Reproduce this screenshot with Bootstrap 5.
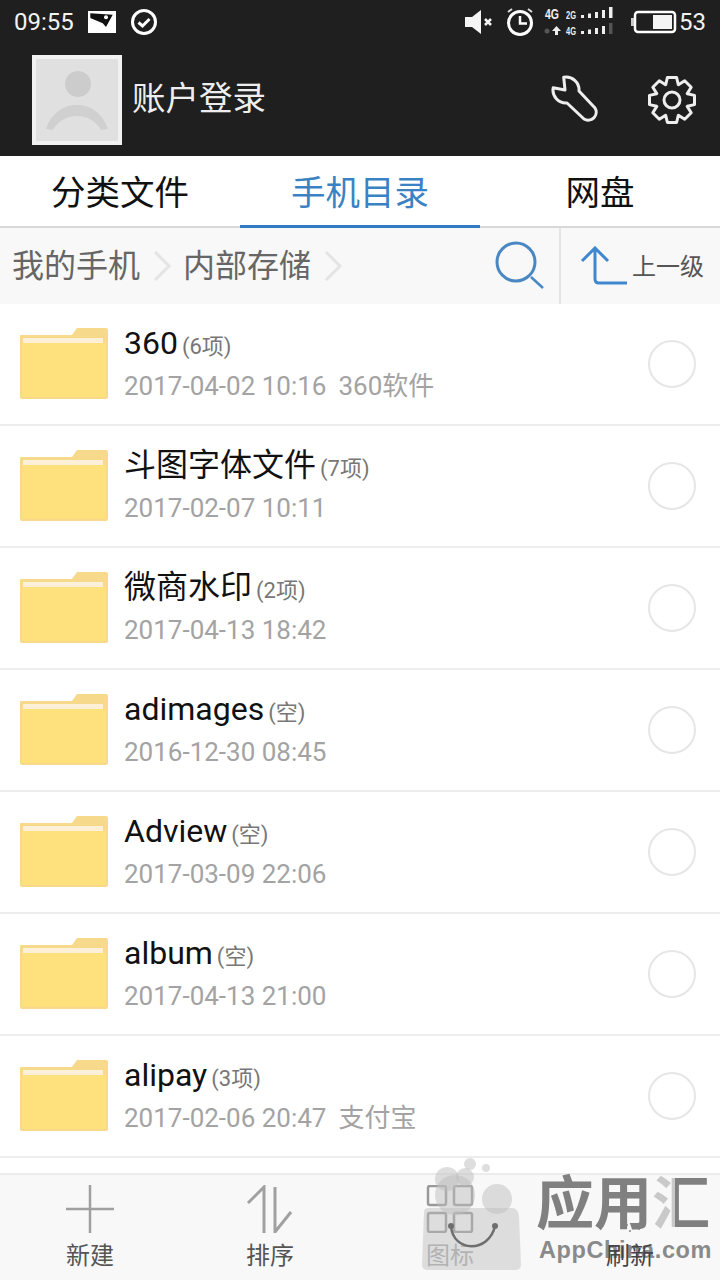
<!DOCTYPE html>
<html lang="zh-CN">
<head>
    <meta charset="UTF-8">
    <title>文件管理</title>
    <link href="https://cdn.jsdelivr.net/npm/bootstrap@5.3.2/dist/css/bootstrap.min.css" rel="stylesheet">
    <script src="https://cdn.jsdelivr.net/npm/bootstrap@5.3.2/dist/js/bootstrap.bundle.min.js"></script>
    <style>
        body {
            width: 720px;
            height: 1280px;
            overflow: hidden;
            position: relative;
            font-family: Roboto, "Noto Sans CJK SC", sans-serif;
            background: #fff;
        }
        #topArea { height: 156px; background: #1f1f1f; color: #f2f2f2; }
        #statusBar { height: 44px; padding: 0 14px; font-size: 24px; }
        .status-left { gap: 14px; }
        .mini-net { font-family: "Liberation Sans", sans-serif; font-size: 12px; font-weight: 700; }
        #alarmIcon { margin-left: 12px; }
        #netIcon { margin-left: 9px; }
        #batteryIcon { margin-left: 15px; }
        #batteryText { margin-left: 2px; }
        #accountRow { height: 112px; padding-left: 32px; padding-right: 23px; }
        #avatar { width: 90px; height: 90px; border: 4px solid #f1f1f1; background: #e0e0e0; }
        #accountName { font-size: 33.5px; margin-left: 10px; margin-top: -2px; color: #eee; }
        #tabBar { height: 72px; border-bottom: 2px solid #d8d8d8; }
        #tabBar .nav-link {
            height: 72px;
            padding: 10px 0 0;
            font-size: 34.5px;
            line-height: 54px;
            color: #111;
            border-radius: 0;
            background: none;
        }
        #tabBar .nav-link.active { color: #3a82c4; border-bottom: 3px solid #2f7cc5; }
        #crumbBar { height: 76px; background: #f8f8f8; padding-left: 12px; color: #666; font-size: 32px; }
        .crumb-gap { margin: 0 11px 0 12px; }
        #searchBtn { margin-left: auto; margin-right: 14px; }
        #upBtn { width: 161px; height: 76px; border-left: 2px solid #e4e4e4; padding-left: 19px; font-size: 24px; color: #555; }
        #upBtn span { margin-left: 2px; margin-top: 2px; }
        #fileList { height: 869px; overflow: hidden; }
        #fileList .file-row {
            height: 122px;
            padding: 0 24px 0 20px;
            border-width: 0 0 2px;
            border-color: #ececec;
            border-radius: 0;
        }
        .folder-icon { margin-top: -2px; }
        .file-text { margin-top: -1px; margin-left: 16px; }
        .file-name { font-size: 32px; line-height: 40px; color: #111; }
        .file-count { font-size: 22px; color: #777; margin-left: 4px; }
        .file-sub { font-size: 26px; line-height: 38px; color: #a3a3a3; }
        .file-sub span { margin-left: 12px; }
        .pick-circle { width: 48px; height: 48px; border: 2px solid #e6e6e6; border-radius: 50%; }
        #bottomBar { height: 107px; background: #f8f8f8; border-top: 2px solid #ececec; }
        .tool-btn { width: 180px; padding-top: 10px; font-size: 24px; line-height: 34px; color: #555; }
        .tool-btn svg { display: block; margin-bottom: 6px; }
        #refreshLabel { position: relative; z-index: 2; color: #444; }
        #iconLabel { color: #aaa; }
        #watermark { position: absolute; left: 420px; top: 1155px; width: 300px; height: 125px; pointer-events: none; }
        #wmName { position: absolute; left: 116px; top: 14px; font-size: 58px; line-height: 70px; font-weight: 700; color: #808080; white-space: nowrap; }
        #wmName span {
            background: linear-gradient(90deg, #c9c9c9 40%, #808080 40%);
            -webkit-background-clip: text;
            background-clip: text;
            color: transparent;
        }
        #wmSite { position: absolute; left: 119px; top: 80px; font-family: "Liberation Sans", sans-serif; font-size: 23.5px; line-height: 30px; font-weight: 700; color: #8a8a8a; white-space: nowrap; letter-spacing: .6px; }
    </style>
</head>
<body>

<div id="topArea">
    <div id="statusBar" class="d-flex align-items-center">
        <div class="d-flex align-items-center status-left">
            <span>09:55</span>
            <svg width="28" height="23" viewBox="0 0 28 23"><rect width="28" height="22" fill="#fff"/><path d="M2.300 2.300l22.400 1.400L18 16l-3.300-3.700L2.300 7z" fill="#111"/><circle cx="18" cy="6.300" r="2" fill="#fff"/></svg>
            <svg width="28" height="28" viewBox="0 0 28 28"><circle cx="14" cy="14" r="11.500" fill="none" stroke="#fff" stroke-width="3"/><path d="M8.500 14.500l4 3.500 7-7" fill="none" stroke="#fff" stroke-width="3"/></svg>
        </div>
        <div class="d-flex align-items-center ms-auto">
            <svg width="28" height="26" viewBox="0 0 28 26"><path d="M0 8h7l9-7v24l-9-7H0z" fill="#f4f4f4"/><path d="M20 10l6 6m0-6l-6 6" stroke="#f4f4f4" stroke-width="2.500"/></svg>
            <svg id="alarmIcon" width="30" height="30" viewBox="0 0 30 30"><circle cx="15" cy="16" r="11.500" fill="none" stroke="#fff" stroke-width="3"/><path d="M15 9v7.500h7" fill="none" stroke="#fff" stroke-width="2.500"/><path d="M3 5l4-3m20 3l-4-3" stroke="#ddd" stroke-width="2"/></svg>
            <svg id="netIcon" class="mini-net" width="72" height="30" viewBox="0 0 72 30" fill="#eee">
                <text x="1" y="12" font-size="14" textLength="14" lengthAdjust="spacingAndGlyphs">4G</text>
                <text x="22" y="12" font-size="11" textLength="10" lengthAdjust="spacingAndGlyphs">2G</text>
                <rect x="37" y="8" width="3" height="3"/><rect x="44" y="6.500" width="3" height="4.500"/><rect x="51" y="5" width="3" height="6"/><rect x="58" y="3" width="3" height="8"/><rect x="65" y="0" width="3.500" height="11"/>
                <circle cx="3" cy="24" r="2.500" fill="#555"/>
                <path d="M12.500 19l4.500 5h-3v4h-3v-4H8z"/>
                <text x="22" y="28" font-size="11" textLength="10" lengthAdjust="spacingAndGlyphs">4G</text>
                <rect x="37" y="24" width="3" height="3"/><rect x="44" y="22.500" width="3" height="4.500"/><rect x="51" y="21" width="3" height="6"/><rect x="58" y="19" width="3" height="8"/><rect x="65" y="16" width="3.500" height="11" fill="#555"/>
            </svg>
            <svg id="batteryIcon" width="46" height="24" viewBox="0 0 46 24"><rect x="4" y="2" width="40" height="20" rx="3" fill="none" stroke="#fff" stroke-width="2.500"/><rect x="0" y="8" width="3" height="8" fill="#ccc"/><rect x="22" y="5" width="19" height="14" fill="#f4f4f4"/></svg>
            <span id="batteryText">53</span>
        </div>
    </div>
    <div id="accountRow" class="d-flex align-items-center">
        <div id="avatar">
            <svg width="82" height="82" viewBox="0 0 82 82"><circle cx="42" cy="25" r="13" fill="#ccc"/><path d="M10 70c6-17 18-24 31-24s25 7 31 24l-7 1c-5-9-14-14-24-14s-19 5-24 14z" fill="#d0d0d0"/></svg>
        </div>
        <div id="accountName">账户登录</div>
        <div class="ms-auto d-flex align-items-center">
            <svg width="50" height="50" viewBox="0 0 50 50"><path d="M12.700 2.200A13 13 0 0 1 28 16L44 33A8 8 0 0 1 33 44L16 28A13 13 0 0 1 2.200 12.700L14 15z" fill="none" stroke="#eee" stroke-width="3" stroke-linejoin="round"/></svg>
            <svg id="gearIcon" width="50" height="50" viewBox="0 0 50 50" style="margin-left:46px"></svg>
        </div>
    </div>
</div>

<ul id="tabBar" class="nav nav-justified">
    <li class="nav-item"><a class="nav-link" href="#">分类文件</a></li>
    <li class="nav-item"><a class="nav-link active" href="#">手机目录</a></li>
    <li class="nav-item"><a class="nav-link" href="#">网盘</a></li>
</ul>

<div id="crumbBar" class="d-flex align-items-center">
    <span>我的手机</span>
    <svg class="crumb-gap" width="20" height="32" viewBox="0 0 20 32"><path d="M3 2l14 14L3 30" fill="none" stroke="#e4e4e4" stroke-width="3"/></svg>
    <span>内部存储</span>
    <svg class="crumb-gap" width="20" height="32" viewBox="0 0 20 32"><path d="M3 2l14 14L3 30" fill="none" stroke="#e4e4e4" stroke-width="3"/></svg>
    <svg id="searchBtn" width="50" height="50" viewBox="0 0 50 50"><circle cx="21" cy="21" r="19" fill="none" stroke="#4a88c4" stroke-width="3"/><path d="M36 36l12 11" stroke="#4a88c4" stroke-width="2.500"/></svg>
    <div id="upBtn" class="d-flex align-items-center">
        <svg width="50" height="40" viewBox="0 0 50 40"><path d="M2 15L15 2l13 13M15 2v31q0 4 4 4h28" fill="none" stroke="#3f88d0" stroke-width="3"/></svg>
        <span>上一级</span>
    </div>
</div>

<div id="fileList" class="list-group list-group-flush"></div>

<div id="bottomBar" class="d-flex">
    <div class="tool-btn d-flex flex-column align-items-center">
        <svg width="50" height="48" viewBox="0 0 50 48"><path d="M25 0v48M1 24h48" stroke="#a0a0a0" stroke-width="2.500"/></svg>
        <span>新建</span>
    </div>
    <div class="tool-btn d-flex flex-column align-items-center">
        <svg width="50" height="48" viewBox="0 0 50 48"><path d="M19 48V2L3 18M30 2v45l16-20" fill="none" stroke="#a0a0a0" stroke-width="3"/></svg>
        <span>排序</span>
    </div>
    <div class="tool-btn d-flex flex-column align-items-center">
        <svg width="50" height="48" viewBox="0 0 50 48" fill="none" stroke="#999" stroke-width="2.500"><rect x="3" y="1" width="18" height="19" rx="2"/><rect x="29" y="1" width="18" height="19" rx="2"/><rect x="3" y="28" width="18" height="19" rx="2"/><rect x="29" y="28" width="18" height="19" rx="2"/></svg>
        <span id="iconLabel">图标</span>
    </div>
    <div class="tool-btn d-flex flex-column align-items-center">
        <svg width="50" height="48" viewBox="0 0 50 48" fill="#888"><circle cx="22" cy="40" r="1"/><circle cx="27" cy="41" r="1"/><circle cx="31" cy="39" r="1"/><circle cx="34" cy="44" r="1"/><circle cx="25" cy="46" r="1"/></svg>
        <span id="refreshLabel">刷新</span>
    </div>
</div>

<div id="watermark">
    <svg width="110" height="125" viewBox="0 0 110 125" class="position-absolute top-0 start-0">
        <g fill="#bdbdbd" fill-opacity=".5">
            <circle cx="50" cy="9" r="6"/><circle cx="66" cy="13" r="4"/><circle cx="27" cy="24" r="12"/><circle cx="45" cy="22" r="9"/>
            <circle cx="77" cy="44" r="15"/><circle cx="35" cy="40" r="20"/>
            <path d="M8 53h84q6 0 7 8l2 49q0 5-6 5H8q-6 0-6-5l2-53q0-4 4-4z" fill-opacity=".45"/>
        </g>
        <path d="M31 71c2 27 38 27 44 0" fill="none" stroke="#6e6e6e" stroke-width="2.500"/>
        <circle cx="31" cy="71" r="3" fill="#6e6e6e"/><circle cx="75" cy="71" r="3" fill="#6e6e6e"/>
    </svg>
    <div id="wmName">应用<span>汇</span></div>
    <div id="wmSite">AppChina.com</div>
</div>

<script>
const files = [
    { name: '360', count: '(6项)', date: '2017-04-02 10:16', note: '360软件' },
    { name: '斗图字体文件', count: '(7项)', date: '2017-02-07 10:11' },
    { name: '微商水印', count: '(2项)', date: '2017-04-13 18:42' },
    { name: 'adimages', count: '(空)', date: '2016-12-30 08:45' },
    { name: 'Adview', count: '(空)', date: '2017-03-09 22:06' },
    { name: 'album', count: '(空)', date: '2017-04-13 21:00' },
    { name: 'alipay', count: '(3项)', date: '2017-02-06 20:47', note: '支付宝' }
];

const folderIcon = `
    <svg width="88" height="71" viewBox="0 0 88 71" class="folder-icon flex-shrink-0">
        <path d="M1 7h51l5-7h29q2 0 2 2v67q0 2-2 2H2q-2 0-2-2V8q0-1 1-1z" fill="#f6d98a"/>
        <rect x="3" y="10" width="80" height="5" fill="#fdf0d8"/>
        <path d="M2 15h84v54H2z" fill="#fee17c"/>
    </svg>`;

const list = document.getElementById('fileList');
files.forEach(file => {
    const row = document.createElement('div');
    row.className = 'list-group-item file-row d-flex align-items-center';
    row.innerHTML = `
        ${folderIcon}
        <div class="file-text flex-grow-1">
            <div class="file-name">${file.name}<span class="file-count">${file.count}</span></div>
            <div class="file-sub">${file.date}${file.note ? `<span>${file.note}</span>` : ''}</div>
        </div>
        <div class="pick-circle"></div>`;
    list.appendChild(row);
});

// gear outline, 8 teeth
function gearOutline() {
    const pts = [];
    for (let i = 0; i < 8; i++) {
        const a = i * Math.PI / 4 - Math.PI / 2;
        [[-0.39, 16.5], [-0.2, 23], [0.2, 23], [0.39, 16.5]].forEach(([da, r]) => {
            pts.push((25 + r * Math.cos(a + da)).toFixed(1) + ',' + (25 + r * Math.sin(a + da)).toFixed(1));
        });
    }
    return `<polygon points="${pts.join(' ')}" fill="none" stroke="#eee" stroke-width="3" stroke-linejoin="round"/>
            <circle cx="25" cy="25" r="8" fill="none" stroke="#eee" stroke-width="3"/>`;
}
document.getElementById('gearIcon').innerHTML = gearOutline();
</script>

</body>
</html>
